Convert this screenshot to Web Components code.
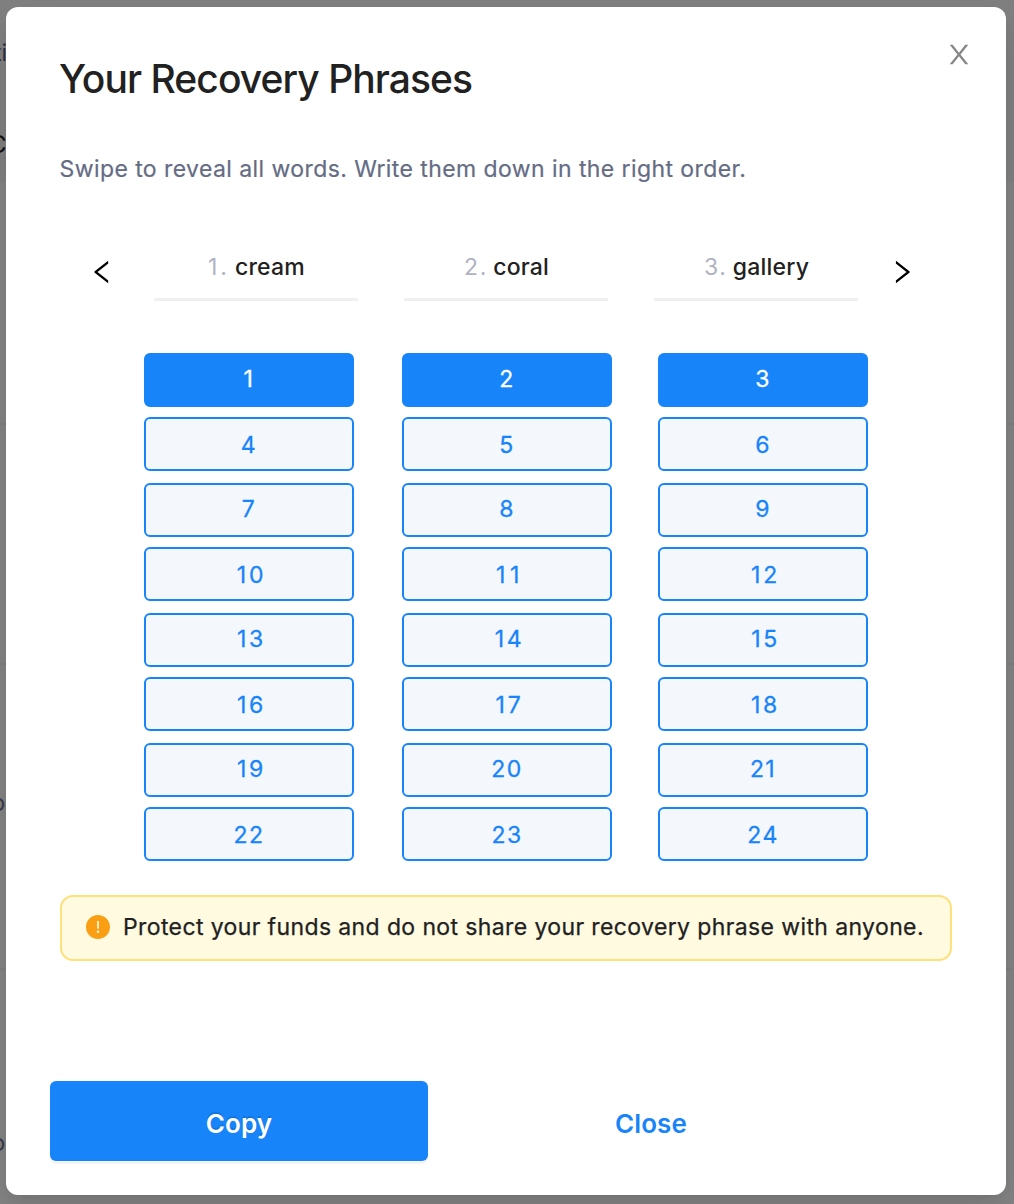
<!DOCTYPE html>
<html lang="en">
<head>
<meta charset="utf-8">
<title>Your Recovery Phrases</title>
<style>
html,body{margin:0;padding:0}
body{width:1014px;height:1204px;overflow:hidden;font-family:Inter,"Noto Sans",sans-serif;color:#212121}
</style>
</head>
<body>
<wallet-backdrop>
  <recovery-modal heading="Your Recovery Phrases">
    <p slot="hint">Swipe to reveal all words. Write them down in the right order.</p>
    <word-carousel>
      <word-slide index="1">cream</word-slide>
      <word-slide index="2">coral</word-slide>
      <word-slide index="3">gallery</word-slide>
    </word-carousel>
    <step-grid total="24" active="3"></step-grid>
    <warning-note>Protect your funds and do not share your recovery phrase with anyone.</warning-note>
    <action-button slot="footer" kind="primary">Copy</action-button>
    <action-button slot="footer" kind="link">Close</action-button>
  </recovery-modal>
</wallet-backdrop>
<script>
function define(name, html, setup) {
  const tpl = document.createElement('template');
  tpl.innerHTML = html;
  customElements.define(name, class extends HTMLElement {
    connectedCallback() {
      if (this.shadowRoot) return;
      const root = this.attachShadow({ mode: 'open' });
      root.append(tpl.content.cloneNode(true));
      if (setup) setup(this, root);
    }
  });
}

/* Dimmed page behind the dialog */
define('wallet-backdrop', `
<style>
:host{display:block;position:relative;width:1014px;height:1204px;overflow:hidden;background:#868686}
.head{position:absolute;inset:0 0 auto 0;height:182px;background:#828282}
.rule{position:absolute;left:0;right:0;height:2px;background:#808080}
.bit{position:absolute;width:7px;height:30px;overflow:hidden;font-size:24px;line-height:30px;white-space:nowrap}
.bit span{display:block}
.stage{position:relative;padding:7px 8px 9px 6px}
</style>
<div class="head"></div>
<div class="rule" style="top:423px"></div>
<div class="rule" style="top:663px"></div>
<div class="rule" style="top:968px"></div>
<div class="bit" style="top:38px;left:0;color:#33324a"><span style="margin-left:-6px;font-size:23px">ti</span></div>
<div class="bit" style="top:130px;left:0;color:#111"><span style="margin-left:-11px">C</span></div>
<div class="bit" style="top:788px;left:0;color:#393c4b"><span style="margin-left:-9px">o</span></div>
<div class="bit" style="top:1128px;left:0;color:#393c4b"><span style="margin-left:-9px">o</span></div>
<div class="stage"><slot></slot></div>`);

define('recovery-modal', `
<style>
:host{display:flex;flex-direction:column;box-sizing:border-box;width:1000px;height:1188px;background:#fff;border-radius:12px;padding:48px 54px 34px 54px;
box-shadow:0 6px 12px -8px rgba(0,0,0,.12),0 12px 32px rgba(0,0,0,.08),0 18px 56px 16px rgba(0,0,0,.05)}
header{display:flex;justify-content:space-between;height:48px}
h1{margin:0 0 0 -1px;font-weight:500;font-size:39px;line-height:48px;letter-spacing:-.94px;white-space:nowrap}
.x{display:block;width:26px;height:27px;margin:-14.5px -20px 0 0;fill:#868686}
::slotted(p){margin:52px 0 0 -.5px;font-size:23px;line-height:28px;letter-spacing:.42px;color:#646c84;white-space:nowrap;-webkit-text-stroke:.2px #646c84}
footer{display:flex;gap:34px;margin:auto -10px 0}
</style>
<header><h1></h1>
<svg class="x" viewBox="64 64 896 896" preserveAspectRatio="none"><path d="M563.8 512l262.5-312.9c4.4-5.2.7-13.1-6.1-13.1h-79.8c-4.7 0-9.2 2.1-12.3 5.7L511.6 449.8 295.1 191.7c-3-3.6-7.5-5.7-12.3-5.7H203c-6.8 0-10.5 7.9-6.1 13.1L459.4 512 196.9 824.9A7.95 7.95 0 00203 838h79.8c4.7 0 9.2-2.1 12.3-5.7l216.5-258.1 216.5 258.1c3 3.6 7.5 5.7 12.3 5.7h79.8c6.8 0 10.5-7.9 6.1-13.1L563.8 512z"/></svg>
</header>
<slot name="hint"></slot>
<slot></slot>
<footer><slot name="footer"></slot></footer>`, (el, root) => {
  root.querySelector('h1').textContent = el.getAttribute('heading');
});

define('word-carousel', `
<style>
:host{display:flex;align-items:flex-start;margin-top:66px;height:52px;padding-left:29.4px}
svg{display:block;width:26px;height:26px;margin-top:10px;flex:none}
.track{display:flex;gap:46px;margin:0 30.6px 0 38.6px}
</style>
<svg viewBox="64 64 896 896"><path d="M724 218.3V141c0-6.7-7.7-10.4-12.9-6.3L260.3 486.8a31.86 31.86 0 000 50.3l450.8 352.1c5.3 4.1 12.9.4 12.9-6.3v-77.3c0-4.9-2.3-9.6-6.1-12.6l-360-281 360-281.1c3.8-3 6.1-7.7 6.1-12.6z"/></svg>
<div class="track"><slot></slot></div>
<svg viewBox="64 64 896 896"><path d="M765.7 486.8L314.9 134.7A7.97 7.97 0 00302 141v77.3c0 4.9 2.3 9.6 6.1 12.6l360 281.1-360 281.1c-3.9 3-6.1 7.7-6.1 12.6V883c0 6.7 7.7 10.4 12.9 6.3l450.8-352.1a31.96 31.96 0 000-50.4z"/></svg>`);

define('word-slide', `
<style>
:host{display:flex;justify-content:center;gap:5px;box-sizing:border-box;width:204px;height:52px;border-bottom:3px solid #f0f0f0;padding:4px 0 0 1px;font-size:23px;line-height:28px;font-weight:500;letter-spacing:.2px;white-space:nowrap}
.n{font-weight:400;color:#b0b3c1;letter-spacing:1.8px}
:host([index="1"]) .n{letter-spacing:3px}
</style>
<span class="n"></span><span><slot></slot></span>`, (el, root) => {
  root.querySelector('.n').textContent = el.getAttribute('index') + '.';
});

/* Grid of word positions, three to a row */
define('step-grid', `
<style>
:host{display:grid;grid-template-columns:258px 256px 210px;grid-template-rows:64px 66px 64px 66px 64px 66px 64px 54px;margin:52px 0 0 84px}
</style>`, (el, root) => {
  const total = +el.getAttribute('total'), active = +el.getAttribute('active');
  for (let i = 1; i <= total; i++) {
    const c = document.createElement('step-cell');
    c.textContent = i;
    if (i <= active) c.setAttribute('active', '');
    if (Math.ceil(i / 3) % 2) c.setAttribute('raised', '');
    if (i >= 10 && i < 20) c.setAttribute('teen', '');
    if (i === 11) c.setAttribute('ones', '');
    root.append(c);
  }
});

define('step-cell', `
<style>
:host{display:block;box-sizing:border-box;width:210px;height:54px;border:2px solid #1784fa;border-radius:6px;background:#f4f7fc;color:#1784fa;text-align:center;font-size:23px;line-height:52px;letter-spacing:1.4px;-webkit-text-stroke:.3px}
:host([raised]){line-height:48px}
:host([teen]){letter-spacing:2.7px;padding-left:5px}
:host([ones]){letter-spacing:4.6px;padding-left:6px}
:host([active]){background:#1784fa;color:#fff}
</style><slot></slot>`);

define('warning-note', `
<style>
:host{display:flex;align-items:center;box-sizing:border-box;width:892px;height:66px;margin-top:34px;border:2px solid #ffe07a;border-radius:13px;background:#fffae0;padding:0 0 2px 24px;font-size:23px;line-height:28px;letter-spacing:.385px;white-space:nowrap;-webkit-text-stroke:.25px}
svg{width:24px;height:24px;margin-right:13px;fill:#fa9e14;flex:none}
</style>
<svg viewBox="64 64 896 896"><path d="M512 64C264.6 64 64 264.6 64 512s200.6 448 448 448 448-200.6 448-448S759.4 64 512 64zm-32 232c0-4.4 3.6-8 8-8h48c4.4 0 8 3.6 8 8v272c0 4.4-3.6 8-8 8h-48c-4.4 0-8-3.6-8-8V296zm32 440a48.01 48.01 0 010-96 48.01 48.01 0 010 96z"/></svg>
<span><slot></slot></span>`);

define('action-button', `
<style>
:host{display:block;width:378px;height:80px;border-radius:6px;text-align:center;font-size:26px;font-weight:600;line-height:86px;letter-spacing:.1px;color:#1784fa}
:host([kind=primary]){background:#1784fa;color:#fff;box-shadow:0 3px 0 rgba(0,0,0,.045);text-shadow:0 -2px 0 rgba(0,0,0,.12)}
</style><slot></slot>`);
</script>
</body>
</html>
